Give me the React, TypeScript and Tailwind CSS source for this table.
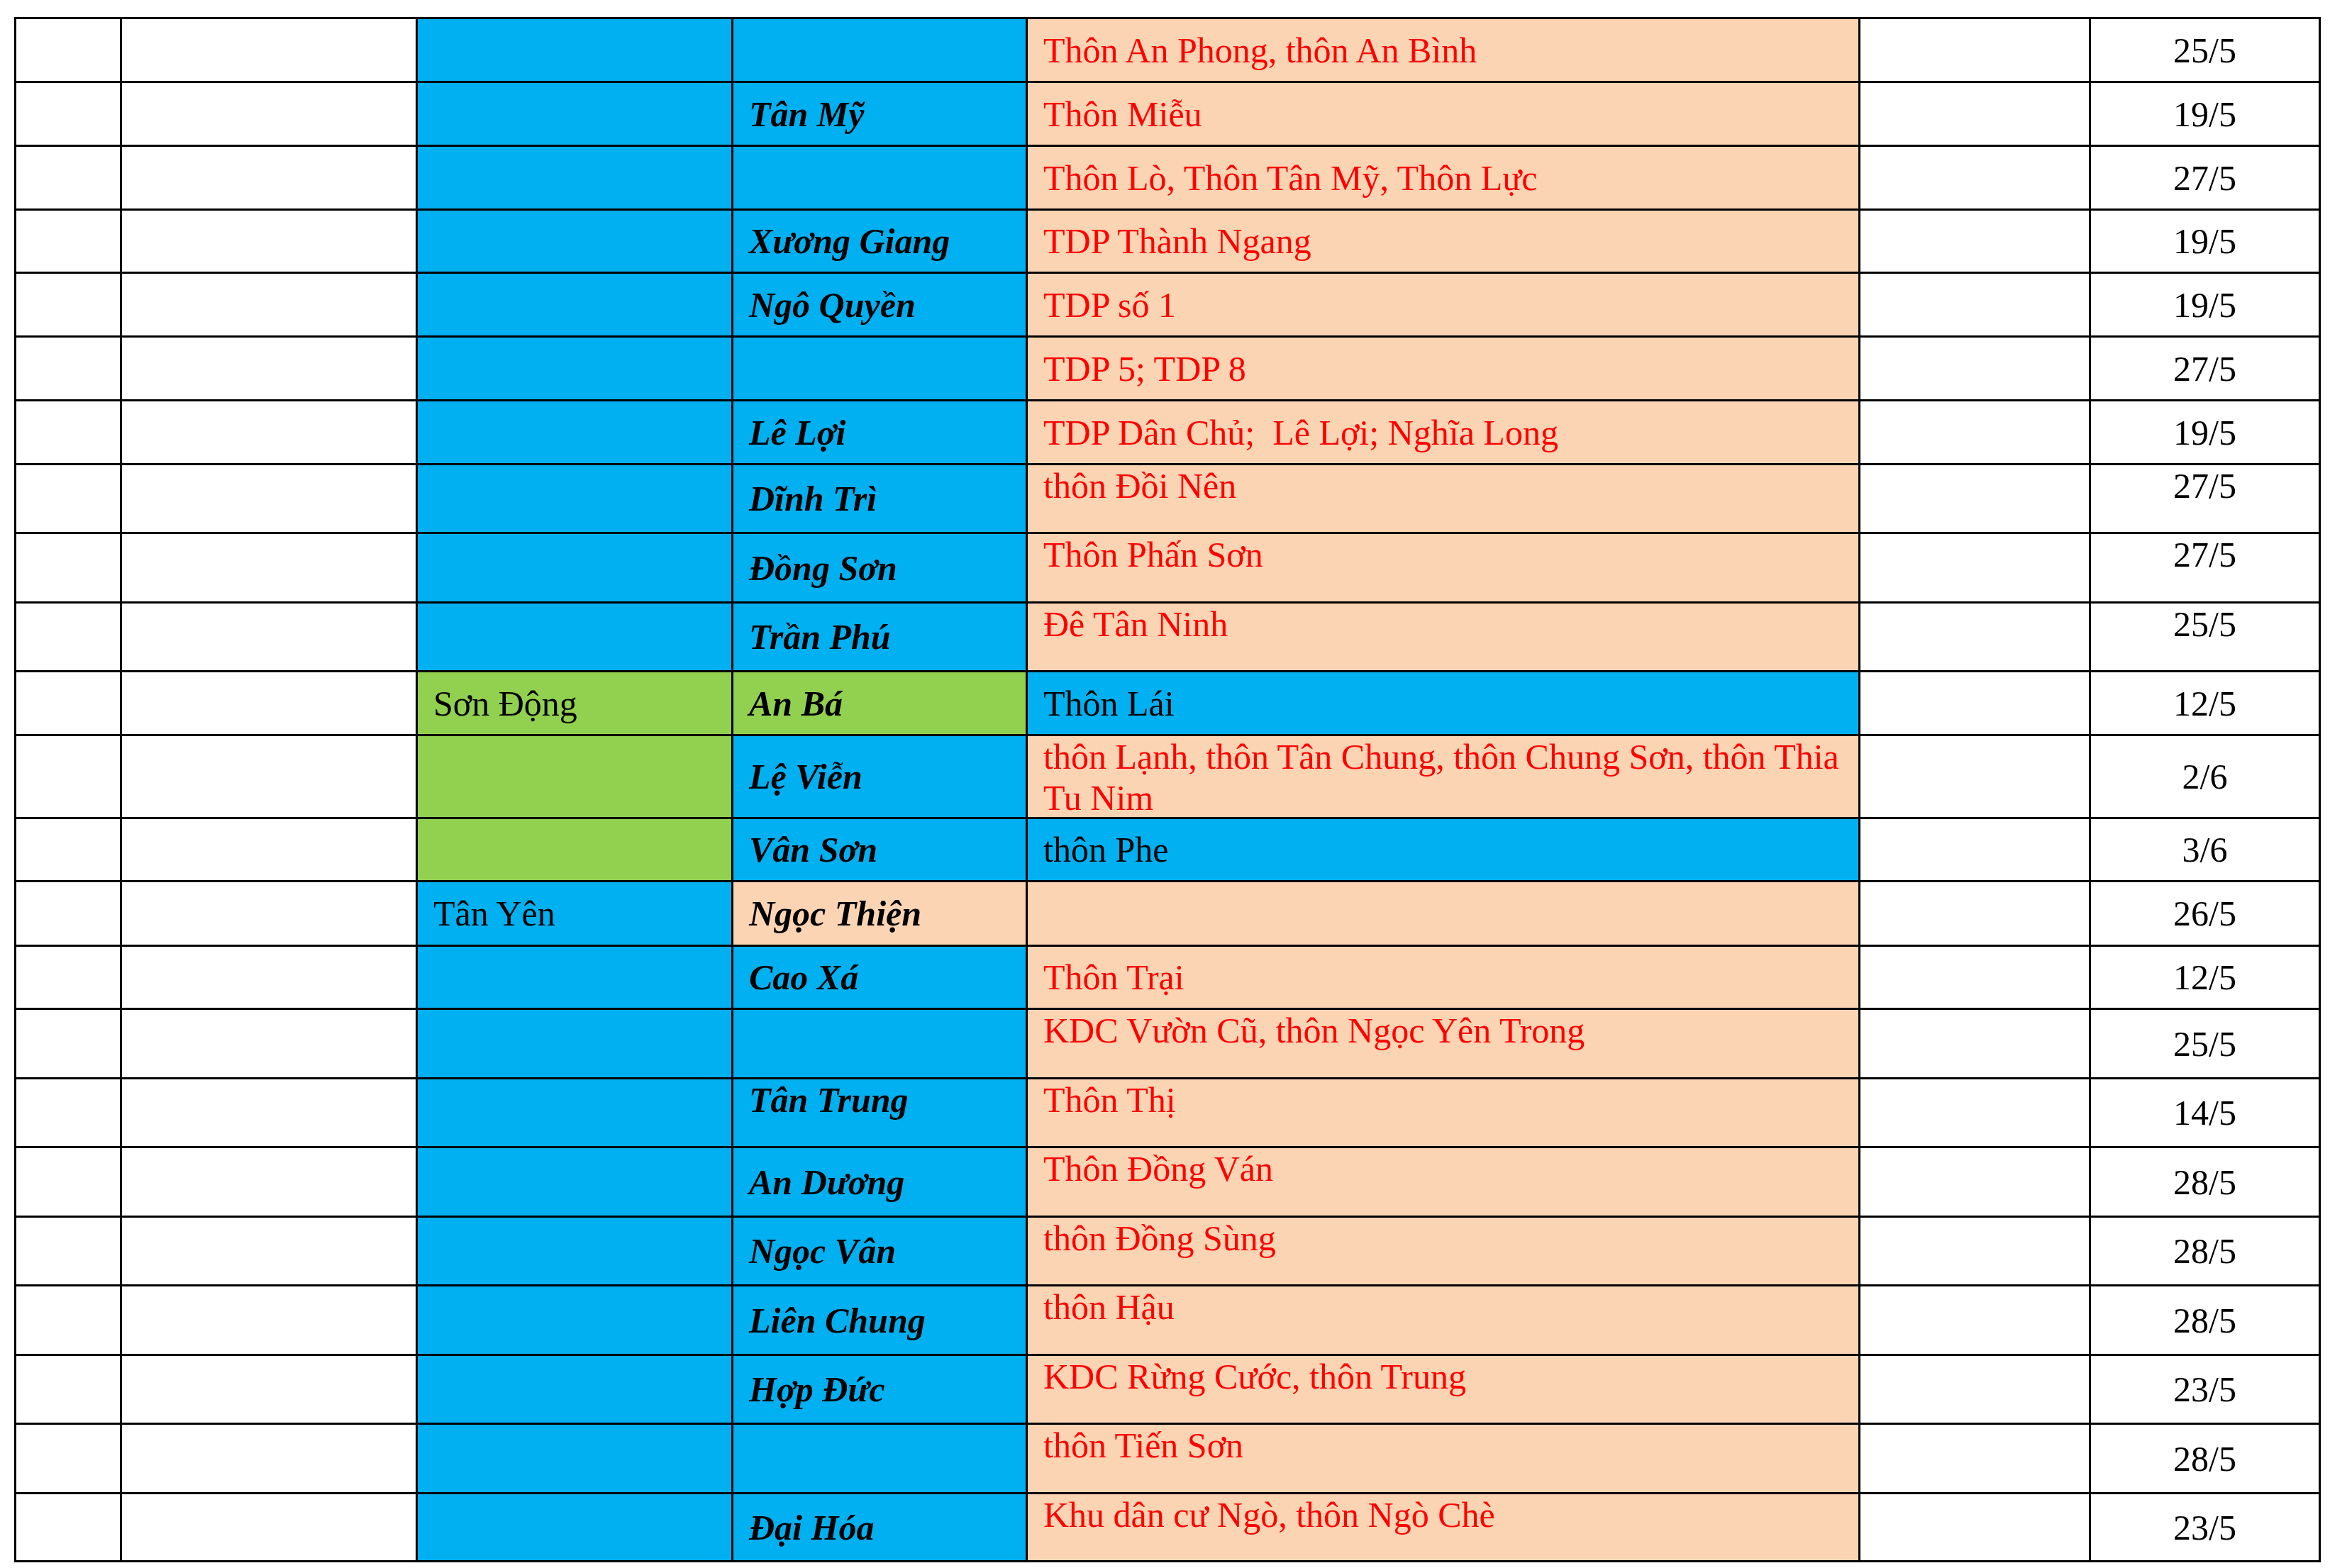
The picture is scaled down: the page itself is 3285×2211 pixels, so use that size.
import type { ReactNode } from "react";

type Fill = "blue" | "green" | "peach" | "white";

interface Row {
    h: string;
    c3: Fill;
    district?: string;
    c4: Fill;
    commune?: string;
    communeTop?: boolean;
    c5: Fill;
    place?: ReactNode;
    placeBlack?: boolean;
    placeTop?: boolean;
    date: string;
    dateTop?: boolean;
}

const fills: Record<Fill, string> = {
    blue: "bg-[#00b0f0]",
    green: "bg-[#92d050]",
    peach: "bg-[#fbd4b4]",
    white: "bg-white",
};

const rows: Row[] = [
    { h: "h-[87px]", c3: "blue", c4: "blue", c5: "peach", place: "Thôn An Phong, thôn An Bình", date: "25/5" },
    { h: "h-[87px]", c3: "blue", c4: "blue", commune: "Tân Mỹ", c5: "peach", place: "Thôn Miễu", date: "19/5" },
    { h: "h-[87px]", c3: "blue", c4: "blue", c5: "peach", place: "Thôn Lò, Thôn Tân Mỹ, Thôn Lực", date: "27/5" },
    { h: "h-[86px]", c3: "blue", c4: "blue", commune: "Xương Giang", c5: "peach", place: "TDP Thành Ngang", date: "19/5" },
    { h: "h-[87px]", c3: "blue", c4: "blue", commune: "Ngô Quyền", c5: "peach", place: "TDP số 1", date: "19/5" },
    { h: "h-[87px]", c3: "blue", c4: "blue", c5: "peach", place: "TDP 5; TDP 8", date: "27/5" },
    { h: "h-[87px]", c3: "blue", c4: "blue", commune: "Lê Lợi", c5: "peach", place: "TDP Dân Chủ;  Lê Lợi; Nghĩa Long", date: "19/5" },
    { h: "h-[94px]", c3: "blue", c4: "blue", commune: "Dĩnh Trì", c5: "peach", place: "thôn Đồi Nên", placeTop: true, date: "27/5", dateTop: true },
    { h: "h-[95px]", c3: "blue", c4: "blue", commune: "Đồng Sơn", c5: "peach", place: "Thôn Phấn Sơn", placeTop: true, date: "27/5", dateTop: true },
    { h: "h-[94px]", c3: "blue", c4: "blue", commune: "Trần Phú", c5: "peach", place: "Đê Tân Ninh", placeTop: true, date: "25/5", dateTop: true },
    { h: "h-[87px]", c3: "green", district: "Sơn Động", c4: "green", commune: "An Bá", c5: "blue", place: "Thôn Lái", placeBlack: true, date: "12/5" },
    {
        h: "h-[114px]",
        c3: "green",
        c4: "blue",
        commune: "Lệ Viễn",
        c5: "peach",
        place: (
            <>
                thôn Lạnh, thôn Tân Chung, thôn Chung Sơn, thôn Thia
                <br />
                Tu Nim
            </>
        ),
        placeTop: true,
        date: "2/6",
    },
    { h: "h-[86px]", c3: "green", c4: "blue", commune: "Vân Sơn", c5: "blue", place: "thôn Phe", placeBlack: true, date: "3/6" },
    { h: "h-[88px]", c3: "blue", district: "Tân Yên", c4: "peach", commune: "Ngọc Thiện", c5: "peach", date: "26/5" },
    { h: "h-[86px]", c3: "blue", c4: "blue", commune: "Cao Xá", c5: "peach", place: "Thôn Trại", date: "12/5" },
    { h: "h-[95px]", c3: "blue", c4: "blue", c5: "peach", place: "KDC Vườn Cũ, thôn Ngọc Yên Trong", placeTop: true, date: "25/5" },
    { h: "h-[94px]", c3: "blue", c4: "blue", commune: "Tân Trung", communeTop: true, c5: "peach", place: "Thôn Thị", placeTop: true, date: "14/5" },
    { h: "h-[95px]", c3: "blue", c4: "blue", commune: "An Dương", c5: "peach", place: "Thôn Đồng Ván", placeTop: true, date: "28/5" },
    { h: "h-[94px]", c3: "blue", c4: "blue", commune: "Ngọc Vân", c5: "peach", place: "thôn Đồng Sùng", placeTop: true, date: "28/5" },
    { h: "h-[95px]", c3: "blue", c4: "blue", commune: "Liên Chung", c5: "peach", place: "thôn Hậu", placeTop: true, date: "28/5" },
    { h: "h-[94px]", c3: "blue", c4: "blue", commune: "Hợp Đức", c5: "peach", place: "KDC Rừng Cước, thôn Trung", placeTop: true, date: "23/5" },
    { h: "h-[95px]", c3: "blue", c4: "blue", c5: "peach", place: "thôn Tiến Sơn", placeTop: true, date: "28/5" },
    { h: "h-[93px]", c3: "blue", c4: "blue", commune: "Đại Hóa", c5: "peach", place: "Khu dân cư Ngò, thôn Ngò Chè", placeTop: true, date: "23/5" },
];

function Cell({
    h,
    fill,
    top,
    center,
    className,
    children,
}: {
    h: string;
    fill: Fill;
    top?: boolean;
    center?: boolean;
    className?: string;
    children?: ReactNode;
}) {
    return (
        <div
            className={`${h} ${fills[fill]} flex ${top ? "items-start" : "items-center"} ${
                center ? "justify-center" : "justify-start px-[22px]"
            } ${className ?? ""}`}
        >
            {children}
        </div>
    );
}

export default function App() {
    return (
        <div
            className="min-h-[2211px] bg-white pt-[24px] pl-[20px] text-[50px] leading-[58px] text-black"
            style={{ fontFamily: '"Liberation Serif", "Times New Roman", serif' }}
        >
            <div className="grid w-[3252px] grid-cols-[146px_414px_442px_412px_1171px_322px_321px] gap-[3px] bg-black p-[3px]">
                {rows.map((r, i) => (
                    <div key={i} className="contents">
                        <Cell h={r.h} fill="white" />
                        <Cell h={r.h} fill="white" />
                        <Cell h={r.h} fill={r.c3}>
                            {r.district && <span className="whitespace-nowrap">{r.district}</span>}
                        </Cell>
                        <Cell h={r.h} fill={r.c4} top={r.communeTop}>
                            {r.commune && (
                                <span className="whitespace-nowrap font-bold italic">{r.commune}</span>
                            )}
                        </Cell>
                        <Cell h={r.h} fill={r.c5} top={r.placeTop}>
                            {r.place && (
                                <span
                                    className={`whitespace-pre ${
                                        r.placeBlack ? "text-black" : "text-[#ff0000]"
                                    }`}
                                >
                                    {r.place}
                                </span>
                            )}
                        </Cell>
                        <Cell h={r.h} fill="white" />
                        <Cell h={r.h} fill="white" top={r.dateTop} center>
                            <span>{r.date}</span>
                        </Cell>
                    </div>
                ))}
            </div>
        </div>
    );
}
